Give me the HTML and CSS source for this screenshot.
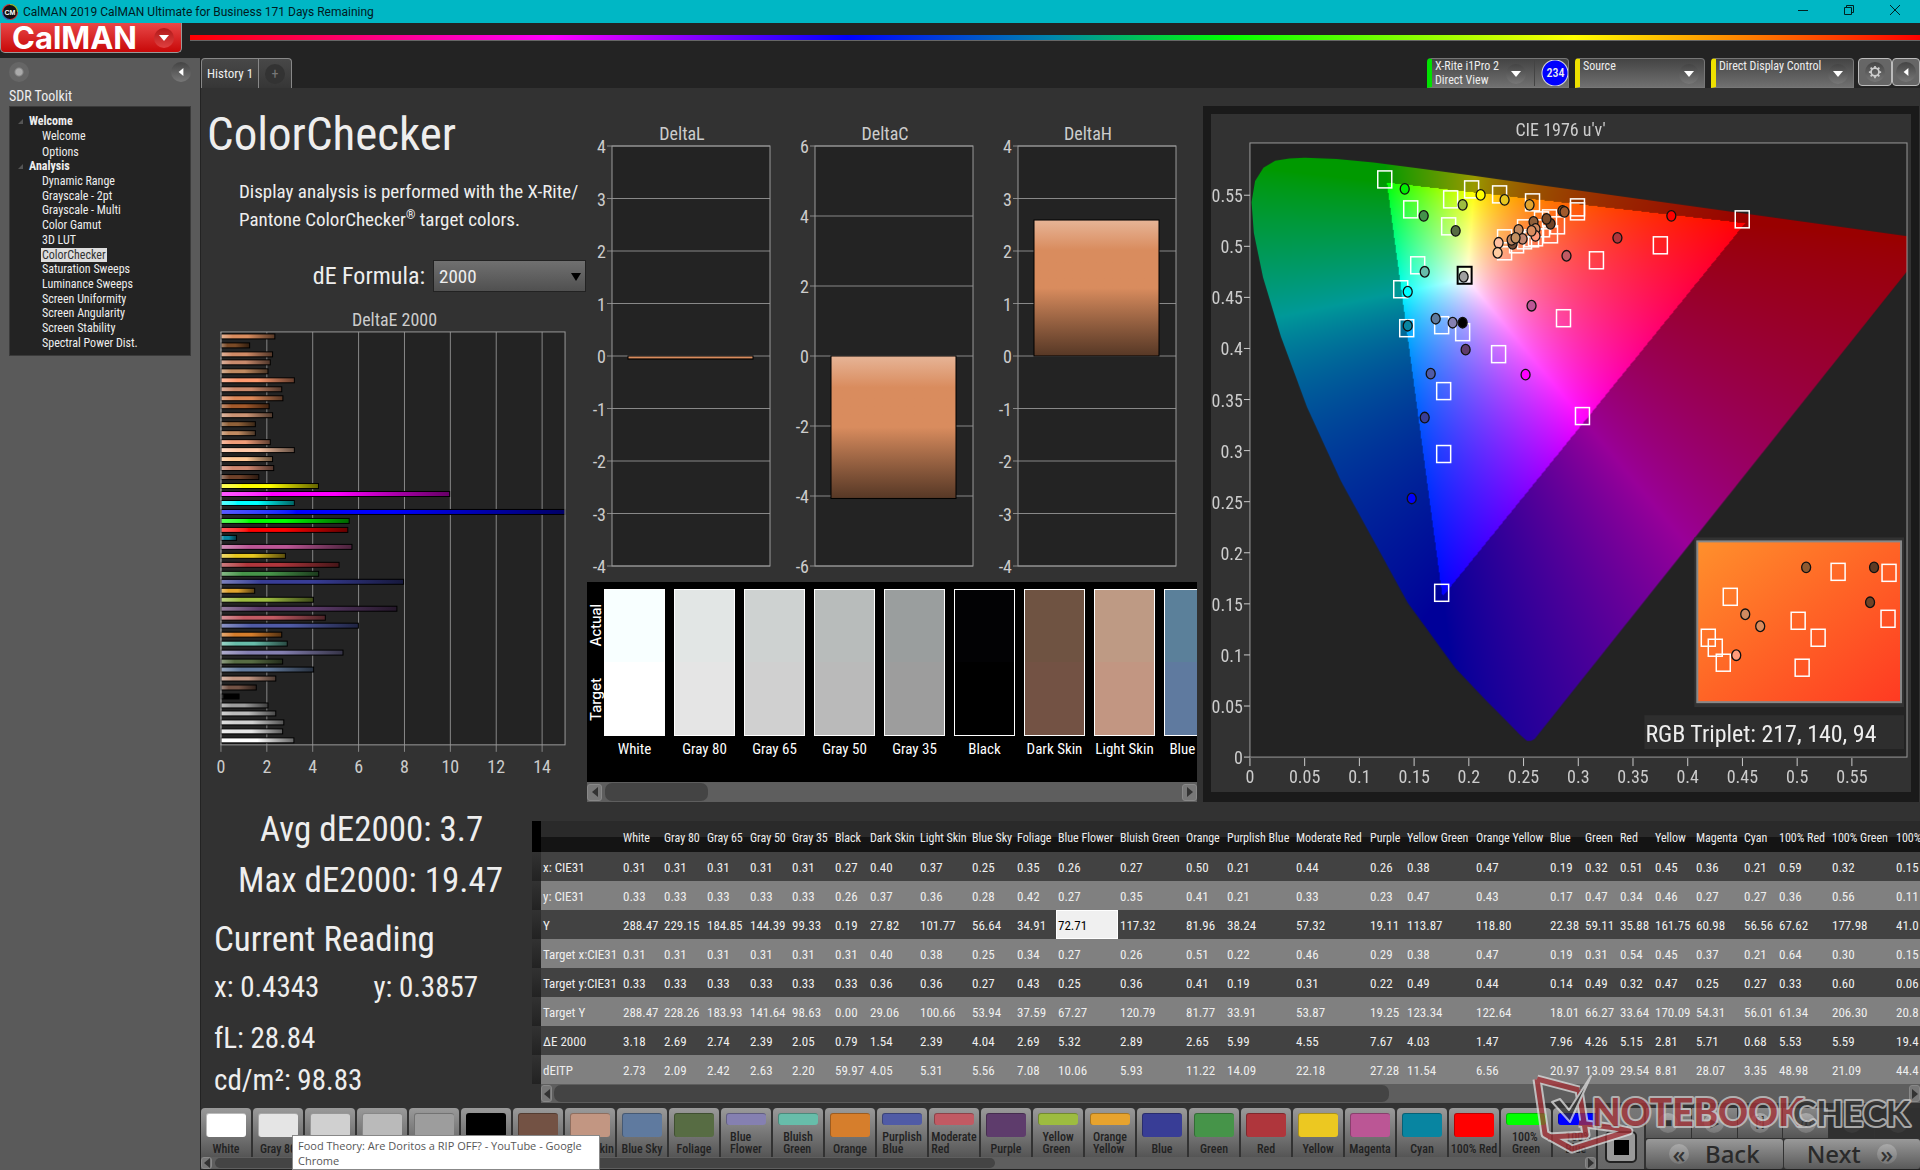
FILE: index.html
```
<!DOCTYPE html>
<html lang="en">
<head>
<meta charset="utf-8">
<title>CalMAN 2019</title>
<link rel="stylesheet" href="styles.css">
</head>
<body>
<header class="titlebar">
  <svg class="app-icon" viewBox="0 0 16 16"><circle cx="8" cy="8" r="8" fill="#c33"/><path d="M8 0a8 8 0 0 1 8 8H8z" fill="#8c3"/><path d="M8 16a8 8 0 0 1-8-8h8z" fill="#36c"/><circle cx="8" cy="8" r="7" fill="#111"/><text x="8" y="11" text-anchor="middle" class="icon-text">CM</text></svg>
  <span class="title">CalMAN 2019 CalMAN Ultimate for Business 171 Days Remaining</span>
  <div class="win-buttons">
    <button aria-label="Minimize"><svg viewBox="0 0 12 12"><path d="M1 6.500h10"/></svg></button>
    <button aria-label="Restore"><svg viewBox="0 0 12 12"><path d="M1.500 3.500h7v7h-7zM3.500 3.500v-2h7v7h-2"/></svg></button>
    <button aria-label="Close"><svg viewBox="0 0 12 12"><path d="M1 1l10 10M11 1L1 11"/></svg></button>
  </div>
</header>
<div class="brandbar">
  <button class="brand"><span>CalMAN</span><i class="round red"><svg viewBox="0 0 10 6"><path d="M0 0h10L5 6z"/></svg></i></button>
  <div class="rainbow"></div>
</div>
<div class="workspace">
  <aside class="sidebar">
    <div class="side-top"><i class="round dot"></i><button class="round" aria-label="Collapse"><svg viewBox="0 0 6 10"><path d="M6 0v10L0 5z"/></svg></button></div>
    <h2>SDR Toolkit</h2>
    <nav class="tree">
      <h3>Welcome</h3>
      <ul class="short"><li><a href="#">Welcome</a></li><li><a href="#">Options</a></li></ul>
      <h3>Analysis</h3>
      <ul class="long"><li><a href="#">Dynamic Range</a></li><li><a href="#">Grayscale - 2pt</a></li><li><a href="#">Grayscale - Multi</a></li><li><a href="#">Color Gamut</a></li><li><a href="#">3D LUT</a></li><li><a href="#" class="current">ColorChecker</a></li><li><a href="#">Saturation Sweeps</a></li><li><a href="#">Luminance Sweeps</a></li><li><a href="#">Screen Uniformity</a></li><li><a href="#">Screen Angularity</a></li><li><a href="#">Screen Stability</a></li><li><a href="#">Spectral Power Dist.</a></li></ul>
    </nav>
  </aside>
  <main>
    <div class="tabbar">
      <button class="tab">History 1</button><button class="tab add" aria-label="Add"><i class="round dark">+</i></button>
      <div class="devices">
        <button class="device meter"><span>X-Rite i1Pro 2<br>Direct View</span><i class="round"><svg viewBox="0 0 10 6"><path d="M0 0h10L5 6z"/></svg></i><b class="badge">234</b></button>
        <button class="device source"><span>Source</span><i class="round"><svg viewBox="0 0 10 6"><path d="M0 0h10L5 6z"/></svg></i></button>
        <button class="device display"><span>Direct Display Control</span><i class="round"><svg viewBox="0 0 10 6"><path d="M0 0h10L5 6z"/></svg></i></button>
        <button class="square" aria-label="Settings"><i class="round"><svg class="gear" viewBox="0 0 16 16"><circle cx="8" cy="8" r="4.500"/><path d="M8 1v3M8 12v3M1 8h3M12 8h3M3 3l2 2M11 11l2 2M13 3l-2 2M5 11l-2 2"/></svg></i></button>
        <button class="square last" aria-label="Hide"><i class="round"><svg viewBox="0 0 6 10" class="left"><path d="M6 0v10L0 5z"/></svg></i></button>
      </div>
    </div>
    <div class="charts">
      <section class="intro">
        <h1>ColorChecker</h1>
        <p>Display analysis is performed with the X-Rite/<br>Pantone ColorChecker<sup>®</sup> target colors.</p>
        <div class="formula"><label for="de">dE Formula:</label><select id="de"><option>2000</option></select></div>
        <svg class="chart" id="delta-e" viewBox="0 0 387 480"></svg>
      </section>
      <section class="middle">
        <div class="deltas"><svg class="chart" id="delta-l" viewBox="0 0 203 460"></svg><svg class="chart" id="delta-c" viewBox="0 0 203 460"></svg><svg class="chart" id="delta-h" viewBox="0 0 203 460"></svg></div>
        <div class="compare"><div class="compare-axis"><span>Actual</span><span>Target</span></div><div class="patches" id="patches"></div></div>
        <div class="scroll patch-scroll"><button class="prev" aria-label="Scroll left"></button><i class="thumb"></i><button class="next" aria-label="Scroll right"></button></div>
      </section>
      <section class="cie"><div class="cie-inner"><canvas id="gamut" width="701" height="679"></canvas><svg class="chart" id="cie" viewBox="0 0 701 679"></svg></div></section>
    </div>
    <div class="results">
      <section class="readings">
        <p class="big avg">Avg dE2000: 3.7</p>
        <p class="big max">Max dE2000: 19.47</p>
        <h2>Current Reading</h2>
        <div class="pair"><span>x: 0.4343</span><span>y: 0.3857</span></div>
        <p>fL: 28.84</p>
        <p>cd/m²: 98.83</p>
      </section>
      <section class="grid">
        <div class="table-clip"><table><colgroup id="cols"></colgroup><thead><tr id="head"></tr></thead><tbody id="rows"></tbody></table></div>
        <div class="scroll grid-scroll"><button class="prev" aria-label="Scroll left"></button><i class="thumb"></i><button class="next" aria-label="Scroll right"></button></div>
      </section>
    </div>
    <footer class="bottom">
      <div class="swatches">
        <div class="swatch-row" id="swatches"></div>
        <div class="scroll swatch-scroll"><button class="prev" aria-label="Scroll left"></button><i class="thumb"></i><button class="next" aria-label="Scroll right"></button></div>
      </div>
      <div class="stopper"><button class="up" aria-label="Up"></button><button class="stop" aria-label="Stop"><i></i></button></div>
      <div class="controls">
        <div class="transport">
          <button aria-label="Stop reading"><i class="round light">■</i></button><button aria-label="Play"><i class="round light">▶</i></button><button aria-label="Read series"><i class="round light">[·]</i></button><button aria-label="Continuous"><i class="round light">∞</i></button><button class="off" aria-label="Refresh"><i class="round">↻</i></button><button class="off" aria-label="More"><i class="round"></i></button>
        </div>
        <div class="pager"><button><i class="round light">«</i>Back</button><button>Next<i class="round light">»</i></button></div>
      </div>
    </footer>
  </main>
</div>
<div class="tooltip" role="tooltip">Food Theory: Are Doritos a RIP OFF? - YouTube - Google Chrome</div>
<svg class="watermark" viewBox="0 0 388 84">
  <g fill="none" stroke-linejoin="round">
    <path d="M5 7l42 11M5 7l8 55 27 15 57-18-14-3-36-5M47 18l7 45-38 2" stroke="#ddd" stroke-width="9"/>
    <path d="M5 7l42 11M5 7l8 55 27 15 57-18-14-3-36-5M47 18l7 45-38 2" stroke="#a83238" stroke-width="5"/>
    <path d="M20 30l8-3 9 11L59 4 38 50z" fill="#333" stroke="#ddd" stroke-width="2"/>
  </g>
  <text x="60" y="54" class="note">NOTEBOOK</text><text x="261" y="54" class="check">CHECK</text>
</svg>
<script src="app.js"></script>
</body>
</html>
```
FILE: styles.css
```
* { box-sizing: border-box; }
body { margin: 0; min-height: 100vh; display: flex; flex-direction: column; overflow: hidden; background: #232323; color: #eee; font: 12px "Roboto Condensed", "Roboto", sans-serif; }
button, select { font: inherit; color: inherit; border: 0; padding: 0; margin: 0; background: none; }
h1, h2, h3, p, ul { margin: 0; padding: 0; font-weight: 400; list-style: none; }
i { font-style: normal; }
a { color: inherit; text-decoration: none; }

.titlebar { height: 23px; display: flex; align-items: center; background: #00b7c5; color: #001a1e; font: 12px "Roboto", sans-serif; padding-left: 2px; }
.app-icon { width: 16px; height: 16px; }
.icon-text { font: bold 7px "Liberation Sans", sans-serif; fill: #fff; }
.title { margin-left: 5px; flex: 1; }
.win-buttons { display: flex; padding-right: 2px; }
.win-buttons button { width: 46px; height: 22px; }
.win-buttons svg { width: 12px; height: 12px; fill: none; stroke: #022; }

.brandbar { height: 35px; display: flex; align-items: flex-start; gap: 8px; }
.brand { width: 182px; height: 30px; display: flex; align-items: center; justify-content: space-between; padding: 0 7px 0 11px; background: linear-gradient(#e84848, #c80808); border: 1px solid #999; border-top: 0; border-radius: 0 0 5px 5px; color: #fff; font: bold 31px "Inter", sans-serif; }
.brand span { line-height: 28px; }
.rainbow { flex: 1; height: 6px; margin-top: 12px; background: linear-gradient(90deg, #f00, #f0f 21%, #00f 38%, #08a 50%, #0f0 60%, #ff0 80%, #f00); border-bottom: 1px solid #666; }

.round { width: 20px; height: 20px; border-radius: 50%; display: inline-flex; align-items: center; justify-content: center; background: linear-gradient(#444, #777); flex: none; }
.round svg { width: 10px; height: 8px; fill: #fff; }
.round.red { background: linear-gradient(#b01818, #e04040); }
.round.dark { background: #333; color: #777; font-size: 14px; }
.round.light { background: linear-gradient(#aaa, #777); color: #333; }
.round.dot { background: radial-gradient(circle, #aaa 0 3px, #666 5px); }

.workspace { flex: 1; display: flex; }
.sidebar { width: 200px; background: #5a5a5a; padding: 4px 9px; }
.side-top { display: flex; justify-content: space-between; height: 24px; }
.sidebar h2 { font-size: 14px; line-height: 20px; }
.tree { height: 250px; padding: 7px 0 0 19px; background: #232323; border: 1px solid #3a3a3a; }
.tree h3 { font-size: 12px; font-weight: 700; line-height: 14px; position: relative; }
.tree h3::before { content: ""; position: absolute; left: -11px; top: 5px; border-left: 5px solid transparent; border-bottom: 5px solid #555; }
.tree ul { display: flex; flex-direction: column; justify-content: space-between; padding-left: 12px; line-height: 14px; }
.short { height: 31px; padding-top: 1px; }
.long { height: 177px; padding-top: 1px; }
.tree a { padding: 0 1px; }
.current { background: #ddd; color: #333; }

main { flex: 1; min-width: 0; display: flex; flex-direction: column; background: #323232; border-left: 1px solid #232323; }
.tabbar { height: 30px; display: flex; background: #232323; }
.tab { width: 58px; background: linear-gradient(#484848, #363636); border: 1px solid #888; border-bottom: 0; border-radius: 4px 0 0 0; font-size: 13px; }
.tab.add { width: 33px; border-left: 0; border-radius: 0 4px 0 0; }
.devices { margin-left: auto; display: flex; gap: 6px; }
.device { display: flex; align-items: flex-start; text-align: left; background: linear-gradient(#444, #707070); border: 1px solid #777; border-left: 5px solid #eee000; border-radius: 4px 4px 0 0; line-height: 14px; padding-left: 3px; }
.device span { flex: 1; white-space: nowrap; }
.device .round { margin: 5px 5px 0 0; }
.device.meter { width: 142px; border-left-color: #00e000; }
.device.meter .round { margin-right: 8px; }
.device.source { width: 130px; }
.device.display { width: 143px; }
.badge { width: 34px; height: 26px; margin: 1px 0 0; padding-left: 8px; border-left: 1px solid #444; background: radial-gradient(circle at 20px 13px, #00f 12px, #ddd 13px, transparent 14px); line-height: 26px; text-align: center; font-weight: 500; }
.square { width: 34px; height: 28px; border: 1px solid #bbb; border-radius: 4px; background: #666; margin-left: -2px; }
.square.last { width: 28px; margin-left: -6px; }
.round .gear { fill: none; stroke: #ccc; stroke-width: 2; height: 14px; width: 14px; }

.charts { display: grid; grid-template-columns: 386px 610px 1fr; height: 715px; }
.chart { display: block; width: 100%; }
.chart text { font-size: 18px; fill: #ccc; }
.intro { padding-top: 18px; }
h1 { font-size: 47px; line-height: 56px; padding-left: 6px; }
.intro p { font-size: 19px; line-height: 28px; padding: 16px 0 0 38px; white-space: nowrap; }
sup { font-size: 12px; line-height: 12px; }
.formula { position: relative; display: flex; justify-content: flex-end; align-items: center; gap: 8px; margin: 26px 1px 14px 0; font-size: 24px; }
.formula select { width: 153px; height: 32px; font-size: 19px; padding-left: 5px; appearance: none; border: 1px solid #222; background: linear-gradient(#707070, #505050); }
.formula::after { content: ""; position: absolute; right: 5px; top: 13px; border: 5px solid transparent; border-top: 8px solid #000; border-bottom: 0; pointer-events: none; }
.middle { padding-top: 33px; }
.deltas { display: flex; }
.deltas svg { width: 203px; flex: none; }
.compare { margin-top: 1px; height: 200px; background: #000; display: flex; overflow: hidden; padding-top: 7px; }
.compare-axis { width: 17px; display: flex; flex-direction: column; justify-content: space-around; height: 147px; align-items: center; font: 500 14px "Inter", sans-serif; color: #fff; }
.compare-axis span { writing-mode: vertical-rl; transform: rotate(180deg); line-height: 17px; }
.patches { display: flex; gap: 9px; }
.patch { width: 61px; text-align: center; font-size: 15px; line-height: 26px; white-space: nowrap; flex: none; color: #fff; }
.patch i { display: block; height: 147px; border: 1px solid #fff; }

.scroll { display: flex; align-items: center; background: #5e5e5e; }
.scroll button { width: 15px; height: 17px; border: 1px solid #888; border-radius: 3px; background: #777; display: flex; align-items: center; justify-content: center; }
.prev::before { content: ""; border: 5px solid transparent; border-right: 6px solid #333; border-left: 0; }
.next::before { content: ""; border: 5px solid transparent; border-left: 6px solid #333; border-right: 0; }
.scroll .next { margin-left: auto; }
.thumb { align-self: stretch; margin: 1px 3px; border-radius: 7px; background: #444; }
.patch-scroll { height: 20px; }
.patch-scroll .thumb { width: 103px; }

.cie { margin: 18px 1px 0 6px; background: #1a1a1a; padding: 8px 8px 8px; height: 696px; }
.cie-inner { display: grid; background: #323232; }
.cie-inner > * { grid-area: 1 / 1; width: 100%; }
.chart .triplet { font-size: 24px; fill: #eee; }

.results { display: grid; grid-template-columns: 331px 1fr; height: 305px; }
.readings { padding: 1px 0 0 13px; font-size: 29px; line-height: 42px; white-space: nowrap; }
.readings .big, .readings h2 { font-size: 35px; line-height: 51px; }
.readings .avg { padding-left: 46px; }
.readings .max { padding-left: 24px; }
.readings h2 { margin-top: 8px; }
.pair { display: flex; gap: 54px; margin: 1px 0 9px; }
.grid { margin-top: 18px; min-width: 0; }
.table-clip { overflow: hidden; }
table { table-layout: fixed; width: 1426px; border-collapse: collapse; font-size: 13px; white-space: nowrap; }
th, td { padding: 2px 0 0 2px; font-weight: 400; text-align: left; height: 29px; overflow: visible; }
thead th { height: 31px; font-size: 12px; background: linear-gradient(#2a2a2a 50%, #141414 50%); }
thead .gutter { background: #000; }
tbody tr { background: #424242; }
tbody tr:nth-child(even) { background: #808080; }
.gutter { background: linear-gradient(#323232, #222); }
.picked { background: #f0f0f0; color: #000; box-shadow: inset 0 0 0 1px #fff; }
.grid-scroll { height: 19px; margin-left: 9px; }
.grid-scroll button { width: 11px; }
.grid-scroll .thumb { flex: 0 0 835px; margin-left: 2px; }

.bottom { display: flex; height: 62px; gap: 2px; border-bottom: 1px solid #222; }
.swatches { flex: 1; min-width: 0; overflow: hidden; }
.swatch-row { display: flex; gap: 2px; }
.swatch { width: 50px; height: 49px; flex: none; display: flex; flex-direction: column; justify-content: space-between; align-items: center; padding: 5px 0 0; background: linear-gradient(#9a9a9a, #555); border-radius: 4px 4px 0 0; color: #222; line-height: 12px; font-weight: 500; text-align: left; }
.swatch i { width: 40px; height: 24px; border-radius: 3px; border: 1px solid #0004; border-bottom: 0; border-right: 0; }
.swatch.two i { height: 12px; }
.swatch span { padding-bottom: 2px; }
.swatch-scroll { height: 12px; }
.swatch-scroll button { width: 11px; height: 12px; }
.swatch-scroll .thumb { width: 780px; }
.stopper { width: 46px; display: flex; flex-direction: column; align-items: center; background: linear-gradient(#777, #666); }
.up { height: 18px; width: 46px; border-bottom: 1px solid #444; }
.stop { width: 32px; height: 32px; margin-top: 5px; border: 2px solid #222; border-radius: 5px; background: #999; display: flex; align-items: center; justify-content: center; }
.stop i { width: 15px; height: 15px; background: #000; }
.controls { width: 274px; display: flex; flex-direction: column; gap: 1px; }
.transport { display: flex; gap: 1px; height: 30px; }
.transport button { flex: 1; background: linear-gradient(#888, #555); display: flex; align-items: center; justify-content: center; }
.transport .off { background: #303030; color: #222; }
.transport .off .round { background: #3a3a3a; }
.pager { display: flex; gap: 1px; flex: 1; }
.pager button { flex: 1; display: flex; align-items: center; justify-content: center; gap: 16px; background: linear-gradient(#999, #5a5a5a); border-radius: 3px; color: #2a2a2a; font: 500 24px "Noto Sans", sans-serif; line-height: 28px; }

.tooltip { position: absolute; left: 292px; bottom: 0; width: 308px; height: 35px; padding: 2px 5px; background: #fff; border: 1px solid #888; color: #575757; font: 11px/15px "Open Sans", sans-serif; }
.watermark { position: absolute; right: 0; bottom: 0; width: 388px; height: 98px; opacity: .75; padding-bottom: 14px; }
.watermark text { font: 900 37px "Lato", sans-serif; paint-order: stroke; stroke: #ccc; stroke-width: 4px; stroke-linejoin: round; fill: #a83238; }
.watermark .check { font-weight: 700; font-size: 35px; fill: #333; }
```
FILE: app.js
```
const NS = "http://www.w3.org/2000/svg";
const $ = (id) => document.getElementById(id);
function add(svg, tag, attrs, text) {
  const el = document.createElementNS(NS, tag);
  for (const k in attrs) el.setAttribute(k, attrs[k]);
  if (text !== undefined) el.textContent = text;
  svg.append(el);
  return el;
}
function gradient(svg, id, color, vertical) {
  const defs = add(svg, "defs", {});
  const g = add(defs, "linearGradient", vertical ? { id, x2: 0, y2: 1 } : { id });
  const mix = (target, p) => `color-mix(in srgb, ${color}, ${target} ${p}%)`;
  [[0, mix("white", 35)], [.22, color], [.5, color], [1, mix("black", 60)]].forEach(([o, c]) =>
    add(g, "stop", { offset: o, style: "stop-color:" + c }));
  return `url(#${id})`;
}

/* Horizontal DeltaE bars */
const deltaE = [[2.35,"#d98c5e"],[1.25,"#7a4a26"],[2.25,"#d08a66"],[2.15,"#c98a6c"],[2.05,"#c08a60"],[3.2,"#ff9a70"],[2.65,"#cc8a6c"],[2.7,"#dd8858"],[2.1,"#a3592a"],[2.25,"#cc9474"],[1.5,"#8f6038"],[1.5,"#c08a60"],[2.15,"#f09c78"],[3.2,"#ffc8a8"],[2.25,"#ffc896"],[2.3,"#d08870"],[1.65,"#6e4028"],[4.25,"#ffff00"],[9.97,"#ff00ff"],[3.2,"#00ffff"],[19.47,"#0000ff"],[5.59,"#00ff00"],[5.53,"#ff0000"],[.68,"#0885a1"],[5.71,"#bb5695"],[2.81,"#e7c71f"],[5.15,"#af363c"],[4.26,"#469449"],[7.96,"#383d96"],[1.47,"#e0a32e"],[4.03,"#9dbc40"],[7.67,"#5e3c6c"],[4.55,"#c15a63"],[5.99,"#505ba6"],[2.65,"#d67e2c"],[2.89,"#67bdaa"],[5.32,"#8580b1"],[2.69,"#576c43"],[4.04,"#627a9d"],[2.39,"#c29682"],[1.54,"#735244"],[.79,"#000000"],[2.05,"#9d9d9d"],[2.39,"#bababa"],[2.74,"#d0d0d0"],[2.69,"#e5e5e5"],[3.18,"#ffffff"]];
(function () {
  const s = $("delta-e"), x0 = 20, unit = 23;
  add(s, "text", { x: 194, y: 20, "text-anchor": "middle" }, "DeltaE 2000");
  add(s, "rect", { x: x0, y: 26, width: 345, height: 414, fill: "#232323" });
  for (let v = 0; v <= 14; v += 2) {
    const x = x0 + v * unit;
    add(s, "path", { d: `M${x} 26V447`, stroke: "#888" });
    add(s, "text", { x, y: 468, "text-anchor": "middle" }, v);
  }
  deltaE.forEach(([v, c], i) => {
    add(s, "rect", { x: x0, y: Math.round(28 + i * 8.8), width: Math.min(v, 15) * unit, height: 5, fill: gradient(s, "e" + i, c), stroke: "#000", "stroke-width": 1 });
  });
  add(s, "rect", { x: x0, y: 26, width: 345, height: 414, fill: "none", stroke: "#999" });
})();

/* Vertical delta charts */
function delta(id, title, max, step, value) {
  const s = $(id), zero = 235, unit = 210 / max;
  add(s, "text", { x: 95, y: 19, "text-anchor": "middle" }, title);
  add(s, "rect", { x: 25, y: 25, width: 158, height: 420, fill: "#232323" });
  for (let v = -max; v <= max; v += step) {
    const y = zero - v * unit;
    add(s, "path", { d: `M20 ${y}H183`, stroke: "#888", "stroke-width": 1 });
    add(s, "text", { x: 19, y: y + 7, "text-anchor": "end" }, v);
  }
  add(s, "rect", { x: 25, y: 25, width: 158, height: 420, fill: "none", stroke: "#999" });
  add(s, "rect", { x: 41, y: value > 0 ? zero - value * unit : zero, width: 125, height: Math.abs(value) * unit, fill: gradient(s, id + "g", "#d98c5e", true), stroke: "#000" });
}
delta("delta-l", "DeltaL", 4, 1, -.06);
delta("delta-c", "DeltaC", 6, 2, -4.07);
delta("delta-h", "DeltaH", 4, 1, 2.59);

/* Actual and target patches */
[["White","#f8ffff","#ffffff"],["Gray 80","#e2e6e5","#e5e5e5"],["Gray 65","#ced2d1","#d0d0d0"],["Gray 50","#b8bcbb","#bababa"],["Gray 35","#9a9e9e","#9d9d9d"],["Black","#020204","#000000"],["Dark Skin","#6f5342","#735244"],["Light Skin","#be9a84","#c29682"],["Blue Sky","#5b809a","#5f7a9f"]].forEach(([n, a, t]) => {
  const d = document.createElement("div");
  d.className = "patch";
  d.innerHTML = `<i style="background:linear-gradient(${a} 50%,${t} 50%)"></i>${n}`;
  $("patches").append(d);
});

/* Chromaticity diagram */
const px = (u) => 39 + u * 1096, py = (v) => 644 - v * 1023;
const locus = [[.2600,.0175],[.2568,.0158],[.2530,.0158],[.2461,.0226],[.2347,.035],[.2161,.055],[.1877,.0871],[.1441,.151],[.0828,.2708],[.0521,.3427],[.0282,.4117],[.0119,.4698],[.0035,.5131],[.0014,.5432],[.0046,.5638],[.0123,.577],[.0231,.5837],[.036,.5861],[.0501,.5868],[.0792,.5856],[.1127,.5821],[.1531,.5766],[.2026,.5694],[.2623,.5604],[.3315,.5501],[.4035,.5393],[.5203,.5219],[.6234,.5065]];
(function () {
  const ctx = $("gamut").getContext("2d"), img = ctx.createImageData(701, 679);
  const layer = document.createElement("canvas");
  layer.width = 701; layer.height = 679;
  for (let y = 0; y < 679; y++) for (let x = 0; x < 701; x++) {
    const u = (x - 39) / 1096, v = Math.max((644 - y) / 1023, .002);
    const X = 9 * u / (4 * v), Z = (12 - 3 * u - 20 * v) / (4 * v);
    const rgb = [3.2406 * X - 1.5372 - .4986 * Z, -.9689 * X + 1.8758 + .0415 * Z, .0557 * X - .204 + 1.057 * Z];
    const scale = Math.min(...rgb) < -.004 ? .6 : 1, top = Math.max(...rgb);
    const o = (y * 701 + x) * 4;
    rgb.forEach((c, i) => { img.data[o + i] = 255 * scale * Math.pow(Math.max(c / top, 0), .8); });
    img.data[o + 3] = 255;
  }
  layer.getContext("2d").putImageData(img, 0, 0);
  ctx.fillStyle = "#232323";
  ctx.fillRect(39, 29, 658, 615);
  ctx.beginPath();
  ctx.rect(39, 29, 658, 615);
  ctx.clip();
  ctx.beginPath();
  locus.forEach(([u, v]) => ctx.lineTo(px(u), py(v)));
  ctx.closePath();
  ctx.clip();
  ctx.drawImage(layer, 0, 0);
})();
(function () {
  const s = $("cie");
  add(s, "text", { x: 350, y: 22, "text-anchor": "middle" }, "CIE 1976 u'v'");
  add(s, "rect", { x: 39, y: 29, width: 658, height: 615, fill: "none", stroke: "#999" });
  for (let i = 0; i <= 11; i++) {
    const v = String(i * 5 / 100);
    add(s, "path", { d: `M${px(i * .05)} 645v8M33 ${py(i * .05)}h6`, stroke: "#ccc" });
    add(s, "text", { x: px(i * .05), y: 670, "text-anchor": "middle" }, v);
    add(s, "text", { x: 32, y: py(i * .05) + 7, "text-anchor": "end" }, v);
  }
  const square = (x, y, c) => add(s, "rect", { x: x - 7, y: y - 9, width: 14, height: 17, fill: "none", stroke: c || "#fff", "stroke-width": c ? 2 : 1.5 });
  const dot = ([x, y, c]) => add(s, "ellipse", { cx: x, cy: y, rx: 4.5, ry: 5.3, fill: c, stroke: "#111", "stroke-width": 1.3 });
  [[174,66],[200,96],[240,86],[261,76],[289,81],[322,89],[367,94],[367,98],[238,113],[207,152],[190,176],[196,215],[231,212],[252,219],[288,241],[353,205],[386,147],[450,132],[532,106],[233,278],[372,303],[233,341],[231,480],[340,121],[347,112],[339,105],[331,107],[325,124],[314,115],[306,131],[294,125],[294,138],[314,127],[321,125],[332,115]].forEach(([x, y]) => square(x, y));
  square(254, 162, "#000");
  [[194,75,"#00f000"],[213,102,"#43924a"],[252,91,"#9dbc40"],[270,81,"#ffff00"],[294,86,"#e7c71f"],[319,91,"#e0a32e"],[245,117,"#576c43"],[214,158,"#67bdaa"],[197,178,"#00ffff"],[197,212,"#0885a1"],[225,205,"#5e7a9c"],[242,209,"#8580b1"],[252,209,"#000"],[255,236,"#5e3c6c"],[220,260,"#505ba6"],[214,304,"#383d96"],[315,261,"#ff00ff"],[321,192,"#bb5695"],[356,142,"#c15a63"],[407,124,"#af363c"],[461,102,"#f00"],[201,385,"#00f"],[253,163,"#a0a0a0"],[352,97,"#8a4e20"],[354,98,"#a05a2c"],[340,110,"#6f4226"],[336,105,"#7a4a28"],[323,108,"#8f5f3a"],[308,116,"#c38a60"],[325,115,"#d08a60"],[325,122,"#ff9b7a"],[321,117,"#d98c5e"],[302,130,"#734a35"],[301,126,"#c08660"],[312,125,"#c08670"],[305,124,"#c39060"],[288,129,"#ffc0a0"],[287,139,"#ffcba0"]].forEach(dot);
  const defs = add(s, "defs", {}), g = add(defs, "linearGradient", { id: "inset", x1: 0, y1: 0, x2: 1, y2: 1 });
  [[0, "#ff902c"], [.5, "#ff6426"], [1, "#ff3a22"]].forEach(([o, c]) => add(g, "stop", { offset: o, "stop-color": c }));
  add(s, "rect", { x: 484, y: 424, width: 210, height: 170, fill: "#323232" });
  add(s, "rect", { x: 487, y: 428, width: 204, height: 161, fill: "url(#inset)", stroke: "#888", "stroke-width": 2 });
  [[628,459],[679,460],[520,484],[498,525],[505,535],[513,550],[588,508],[608,525],[592,555],[678,506]].forEach(([x, y]) => square(x, y));
  [[596,454,"#8f5a30"],[664,454,"#5c3a24"],[660,489,"#6f4226"],[535,501,"#d08a60"],[550,513,"#d98c5e"],[526,542,"#ff9b7a"]].forEach(dot);
  add(s, "rect", { x: 434, y: 602, width: 260, height: 34, fill: "#2e2e2e" });
  add(s, "text", { x: 435, y: 629, class: "triplet" }, "RGB Triplet: 217, 140, 94");
})();

/* Results table */
const widths = [9,80,41,43,43,42,43,35,50,52,45,41,62,66,41,69,74,37,69,74,35,35,35,41,48,35,53,64,64];
$("cols").innerHTML = widths.map((w) => `<col style="width:${w}px">`).join("");
const names = ["White","Gray 80","Gray 65","Gray 50","Gray 35","Black","Dark Skin","Light Skin","Blue Sky","Foliage","Blue Flower","Bluish Green","Orange","Purplish Blue","Moderate Red","Purple","Yellow Green","Orange Yellow","Blue","Green","Red","Yellow","Magenta","Cyan","100% Red","100% Green","100% Blue"];
$("head").innerHTML = '<th class="gutter"></th><th></th>' + names.map((n) => `<th>${n}</th>`).join("");
const data = {
  "x: CIE31": "0.31 0.31 0.31 0.31 0.31 0.27 0.40 0.37 0.25 0.35 0.26 0.27 0.50 0.21 0.44 0.26 0.38 0.47 0.19 0.32 0.51 0.45 0.36 0.21 0.59 0.32 0.15",
  "y: CIE31": "0.33 0.33 0.33 0.33 0.33 0.26 0.37 0.36 0.28 0.42 0.27 0.35 0.41 0.21 0.33 0.23 0.47 0.43 0.17 0.47 0.34 0.46 0.27 0.27 0.36 0.56 0.11",
  "Y": "288.47 229.15 184.85 144.39 99.33 0.19 27.82 101.77 56.64 34.91 72.71 117.32 81.96 38.24 57.32 19.11 113.87 118.80 22.38 59.11 35.88 161.75 60.98 56.56 67.62 177.98 41.0",
  "Target x:CIE31": "0.31 0.31 0.31 0.31 0.31 0.31 0.40 0.38 0.25 0.34 0.27 0.26 0.51 0.22 0.46 0.29 0.38 0.47 0.19 0.31 0.54 0.45 0.37 0.21 0.64 0.30 0.15",
  "Target y:CIE31": "0.33 0.33 0.33 0.33 0.33 0.33 0.36 0.36 0.27 0.43 0.25 0.36 0.41 0.19 0.31 0.22 0.49 0.44 0.14 0.49 0.32 0.47 0.25 0.27 0.33 0.60 0.06",
  "Target Y": "288.47 228.26 183.93 141.64 98.63 0.00 29.06 100.66 53.94 37.59 67.27 120.79 81.77 33.91 53.87 19.25 123.34 122.64 18.01 66.27 33.64 170.09 54.31 56.01 61.34 206.30 20.8",
  "ΔE 2000": "3.18 2.69 2.74 2.39 2.05 0.79 1.54 2.39 4.04 2.69 5.32 2.89 2.65 5.99 4.55 7.67 4.03 1.47 7.96 4.26 5.15 2.81 5.71 0.68 5.53 5.59 19.4",
  "dEITP": "2.73 2.09 2.42 2.63 2.20 59.97 4.05 5.31 5.56 7.08 10.06 5.93 11.22 14.09 22.18 27.28 11.54 6.56 20.97 13.09 29.54 8.81 28.07 3.35 48.98 21.09 44.4"
};
$("rows").innerHTML = Object.entries(data).map(([k, v]) => `<tr><td class="gutter"></td><th>${k}</th>` + v.split(" ").map((c) => `<td${c === "72.71" ? ' class="picked"' : ""}>${c}</td>`).join("") + "</tr>").join("");

/* Swatch buttons */
const colors = ["#fff","#e5e5e5","#d0d0d0","#bababa","#9d9d9d","#000","#735244","#c29682","#5f7a9f","#576c43","#8580b1","#67bdaa","#d67e2c","#505ba6","#c15a63","#5e3c6c","#9dbc40","#e7a32e","#383d96","#469449","#af363c","#ecc821","#bb5695","#0885a1","#f00","#0f0","#00f"];
const two = [10, 11, 13, 14, 16, 17, 25, 26];
$("swatches").innerHTML = names.map((n, i) => {
  const wrap = two.includes(i);
  return `<button class="swatch${wrap ? " two" : ""}"><i style="background-color:${colors[i]}"></i><span>${wrap ? n.replace(" ", "<br>") : n}</span></button>`;
}).join("");
```
